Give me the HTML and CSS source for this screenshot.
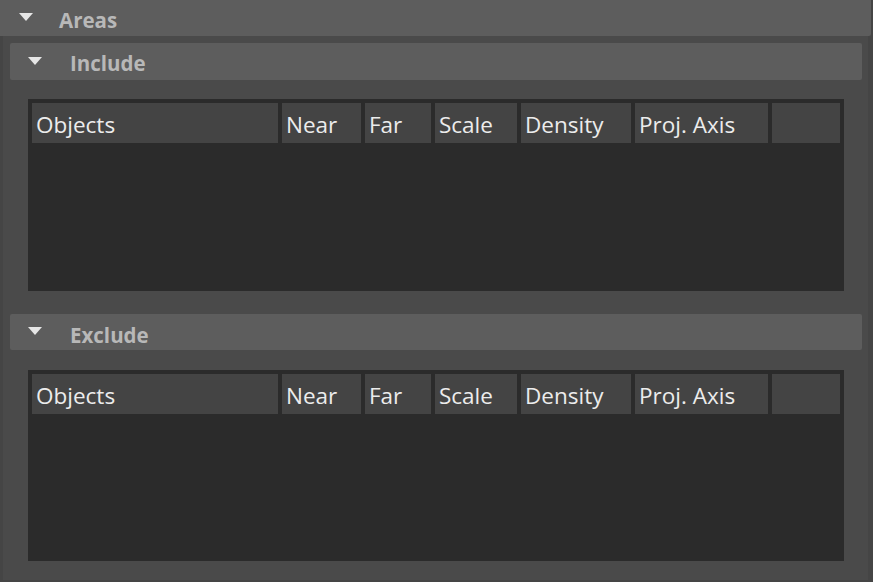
FILE: index.html
```html
<!DOCTYPE html>
<html>
<head>
<meta charset="utf-8">
<link rel="stylesheet" href="styles.css">
</head>
<body>
<div class="areas-header">
  <span class="tri"></span>
  <span class="hdr-label">Areas</span>
</div>
<div class="areas-body">
  <div class="sub-header">
    <span class="tri"></span>
    <span class="hdr-label sub-label">Include</span>
  </div>
  <div class="table">
    <div class="thead">
      <div class="th c-obj">Objects</div>
      <div class="th c-near">Near</div>
      <div class="th c-far">Far</div>
      <div class="th c-scale">Scale</div>
      <div class="th c-dens">Density</div>
      <div class="th c-proj">Proj. Axis</div>
      <div class="th c-last"></div>
    </div>
  </div>
  <div class="sub-header sub-exclude">
    <span class="tri"></span>
    <span class="hdr-label sub-label">Exclude</span>
  </div>
  <div class="table">
    <div class="thead">
      <div class="th c-obj">Objects</div>
      <div class="th c-near">Near</div>
      <div class="th c-far">Far</div>
      <div class="th c-scale">Scale</div>
      <div class="th c-dens">Density</div>
      <div class="th c-proj">Proj. Axis</div>
      <div class="th c-last"></div>
    </div>
  </div>
</div>
</body>
</html>
```

FILE: styles.css
```css
html, body {
  margin: 0;
  padding: 0;
}
body {
  background: #454545;
  width: 873px;
  height: 582px;
  overflow: hidden;
  font-family: "Open Sans", "DejaVu Sans", sans-serif;
}
.areas-header {
  height: 36px;
  width: 871px;
  background: #5d5d5d;
  border-radius: 0 0 2px 0;
  display: flex;
  align-items: center;
  box-sizing: border-box;
  padding-left: 19px;
}
.tri {
  width: 0;
  height: 0;
  border-left: 7px solid transparent;
  border-right: 7px solid transparent;
  border-top: 8px solid #e6e6e6;
  margin-top: -2px;
}
.hdr-label {
  margin-left: 26px;
  margin-top: 4px;
  font-weight: 700;
  font-size: 20.5px;
  color: #b8b8b8;
  line-height: 1;
}
.sub-label {
  margin-left: 28px;
}
.areas-body {
  background: #4a4a4a;
  margin-left: 3px;
  width: 865px;
  height: 544px;
  box-sizing: border-box;
  padding: 7px 6px 0 7px;
}
.sub-header {
  height: 37px;
  background: #5d5d5d;
  border-radius: 2px;
  display: flex;
  align-items: center;
  padding-left: 18px;
}
.sub-exclude {
  margin-top: 23px;
  height: 36px;
}
.sub-exclude .hdr-label {
  margin-top: 6px;
}
.table {
  margin: 19px 0 0 18px;
  width: 816px;
  height: 192px;
  box-sizing: border-box;
  padding: 4px;
  background: #2b2b2b;
}
.sub-exclude + .table {
  margin-top: 20px;
  height: 191px;
}
.thead {
  display: flex;
  gap: 4px;
  height: 40px;
}
.th {
  background: #444444;
  color: #ececec;
  font-size: 22.5px;
  line-height: 37px;
  padding: 3px 0 0 4px;
  box-sizing: border-box;
  white-space: nowrap;
}
.c-obj { width: 246px; }
.c-near { width: 79px; }
.c-far { width: 66px; }
.c-scale { width: 82px; }
.c-dens { width: 110px; }
.c-proj { width: 133px; }
.c-last { width: 68px; }
```
